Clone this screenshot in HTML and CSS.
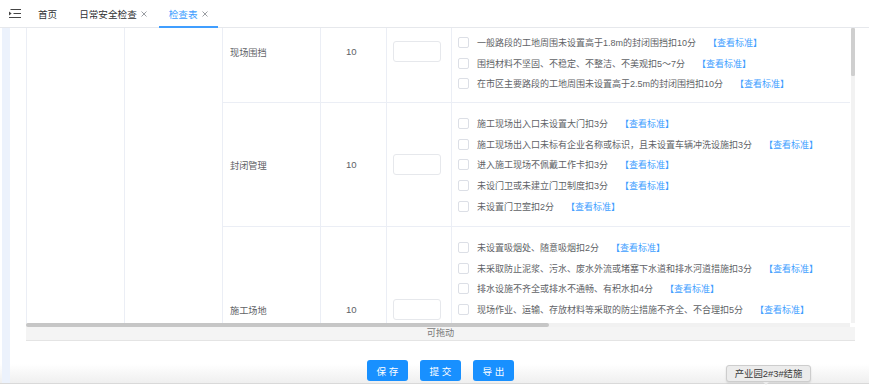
FILE: index.html
```html
<!DOCTYPE html>
<html lang="zh-CN">
<head>
<meta charset="utf-8">
<title>检查表</title>
<link rel="stylesheet" href="styles.css">
</head>
<body>
<div class="app">
  <header class="tabs">
    <div class="menu">
      <svg width="12" height="9" viewBox="0 0 12 9"><path d="M1.5 0.5H12M4.5 4.5H12M0 8.5H12" stroke="#444" stroke-width="1" fill="none"/><path d="M0 2.6L2.6 4.5L0 6.4Z" fill="#444"/></svg>
    </div>
    <div class="tab">首页</div>
    <div class="tab">日常安全检查<svg class="x" width="6" height="6" viewBox="0 0 6 6"><path d="M0.5 0.5L5.5 5.5M5.5 0.5L0.5 5.5" stroke="#909399" stroke-width="0.9"/></svg></div>
    <div class="tab active">检查表<svg class="x" width="6" height="6" viewBox="0 0 6 6"><path d="M0.5 0.5L5.5 5.5M5.5 0.5L0.5 5.5" stroke="#909399" stroke-width="0.9"/></svg></div>
  </header>
  <div class="main">
    <div class="side"></div>
    <div class="content">
      <div class="grid-wrap">
        <div class="viewport">
          <table class="sheet">
            <colgroup>
              <col class="c1"><col class="c2"><col class="c3"><col class="c4"><col class="c5"><col class="c6">
            </colgroup>
            <tr class="r1">
              <td class="blank" rowspan="3"></td>
              <td class="blank" rowspan="3"></td>
              <td class="name">现场围挡</td>
              <td class="score">10</td>
              <td class="inp"><div class="input"></div></td>
              <td class="items first">
                <div class="item"><span class="cb"></span><span class="txt">一般路段的工地周围未设置高于1.8m的封闭围挡扣10分</span><a class="link">【查看标准】</a></div>
                <div class="item"><span class="cb"></span><span class="txt">围挡材料不坚固、不稳定、不整洁、不美观扣5～7分</span><a class="link">【查看标准】</a></div>
                <div class="item"><span class="cb"></span><span class="txt">在市区主要路段的工地周围未设置高于2.5m的封闭围挡扣10分</span><a class="link">【查看标准】</a></div>
              </td>
            </tr>
            <tr class="r2">
              <td class="name">封闭管理</td>
              <td class="score">10</td>
              <td class="inp"><div class="input"></div></td>
              <td class="items">
                <div class="item"><span class="cb"></span><span class="txt">施工现场出入口未设置大门扣3分</span><a class="link">【查看标准】</a></div>
                <div class="item"><span class="cb"></span><span class="txt">施工现场出入口未标有企业名称或标识，且未设置车辆冲洗设施扣3分</span><a class="link">【查看标准】</a></div>
                <div class="item"><span class="cb"></span><span class="txt">进入施工现场不佩戴工作卡扣3分</span><a class="link">【查看标准】</a></div>
                <div class="item"><span class="cb"></span><span class="txt">未设门卫或未建立门卫制度扣3分</span><a class="link">【查看标准】</a></div>
                <div class="item"><span class="cb"></span><span class="txt">未设置门卫室扣2分</span><a class="link">【查看标准】</a></div>
              </td>
            </tr>
            <tr class="r3">
              <td class="name">施工场地</td>
              <td class="score">10</td>
              <td class="inp"><div class="input"></div></td>
              <td class="items">
                <div class="item"><span class="cb"></span><span class="txt">未设置吸烟处、随意吸烟扣2分</span><a class="link">【查看标准】</a></div>
                <div class="item"><span class="cb"></span><span class="txt">未采取防止泥浆、污水、废水外流或堵塞下水道和排水河道措施扣3分</span><a class="link">【查看标准】</a></div>
                <div class="item"><span class="cb"></span><span class="txt">排水设施不齐全或排水不通畅、有积水扣4分</span><a class="link">【查看标准】</a></div>
                <div class="item"><span class="cb"></span><span class="txt">现场作业、运输、存放材料等采取的防尘措施不齐全、不合理扣5分</span><a class="link">【查看标准】</a></div>
              </td>
            </tr>
          </table>
        </div>
        <div class="vbar"><div class="vthumb"></div></div>
      </div>
      <div class="hbar"><div class="hthumb"></div></div>
      <div class="drag">可拖动</div>
      <div class="actions">
        <button class="btn">保 存</button>
        <button class="btn">提 交</button>
        <button class="btn">导 出</button>
      </div>
    </div>
  </div>
  <div class="footer-line"></div>
  <div class="tooltip">产业园2#3#结施</div>
</div>
</body>
</html>
```
FILE: styles.css
```css
* { box-sizing: border-box; }
html, body { margin: 0; padding: 0; }
body {
  width: 869px;
  height: 387px;
  overflow: hidden;
  background: #fff;
  font-family: "Liberation Sans", "Noto Sans CJK SC", sans-serif;
  color: #606266;
}
.app { position: relative; width: 869px; height: 387px; }

.tabs {
  height: 28px;
  border-bottom: 1px solid #e6e8ec;
  display: flex;
  align-items: stretch;
}
.menu {
  width: 28px;
  padding-left: 9px;
  display: flex;
  align-items: center;
}
.tab {
  position: relative;
  display: flex;
  align-items: center;
  padding: 0 10px;
  margin-right: 1px;
  font-size: 9.6px;
  color: #303133;
}
.tab + .tab { margin-left: 1px; }
.tab .x { margin-left: 4px; }
.tab.active { color: #409eff; }
.tab.active::after {
  content: "";
  position: absolute;
  left: 0; right: 0; bottom: -1px;
  height: 2px;
  background: #409eff;
}

.main {
  display: flex;
  height: 355px;
  background: linear-gradient(to bottom, #fff 0, #fff 336px, #efefef 355px);
}
.side {
  margin-left: 2px;
  width: 8px;
  background: #ecf2fc;
}
.content {
  margin-left: 16px;
  width: 829px;
  display: flex;
  flex-direction: column;
}
.grid-wrap {
  display: flex;
  height: 295px;
}
.viewport {
  width: 824px;
  height: 295px;
  overflow: hidden;
}
.vbar {
  width: 5px;
  padding-left: 1px;
}
.vbar::after {
  content: "";
  display: block;
  width: 4px;
  height: 247px;
  background: #f2f2f2;
}
.vthumb {
  width: 4px;
  height: 48px;
  background: #cfcfcf;
  border-radius: 1px;
}

.sheet {
  table-layout: fixed;
  width: 824px;
  border-collapse: separate;
  border-spacing: 0;
  margin-top: -27px;
  border-left: 1px solid #ebeef5;
}
.c1 { width: 98px; }
.c2 { width: 98px; }
.c3 { width: 98px; }
.c4 { width: 66px; }
.c5 { width: 65px; }
.c6 { width: 399px; }
.sheet td {
  border-right: 1px solid #ebeef5;
  border-bottom: 1px solid #ebeef5;
  padding: 0;
  font-size: 9px;
  color: #606266;
}
.r1 { height: 102px; }
.r2 { height: 124px; }
.r3 { height: 166px; }
.name { padding-left: 7px !important; vertical-align: middle; font-size: 9.2px !important; }
.score { padding-left: 25px !important; vertical-align: middle; font-size: 9.6px !important; }
.inp { padding-left: 6px !important; vertical-align: middle; }
.input {
  width: 48px;
  height: 21px;
  border: 1px solid #e6e8ec;
  border-radius: 3px;
  background: #fff;
}
.items {
  vertical-align: top;
  padding: 10px 0 0 6px !important;
}
.items.first { padding-top: 31px !important; }
.item {
  display: flex;
  align-items: center;
  height: 20.8px;
  white-space: nowrap;
}
.cb {
  width: 11px;
  height: 11px;
  border: 1px solid #dcdfe6;
  border-radius: 2px;
  background: #fff;
  margin-right: 8px;
  flex: none;
}
.link {
  margin-left: 12px;
  color: #409eff;
}

.hbar {
  width: 824px;
  height: 4px;
  background: #f1f1f1;
}
.hthumb {
  width: 523px;
  height: 4px;
  background: #c6c6c6;
  border-radius: 2px;
}
.drag {
  height: 14px;
  background: #f4f4f4;
  border-bottom: 1px solid #e4e4e4;
  font-size: 9.2px;
  line-height: 13px;
  text-align: center;
  color: #7a7a7a;
}
.actions {
  margin-top: 19px;
  display: flex;
  justify-content: center;
  gap: 12px;
}
.btn {
  width: 41px;
  height: 21px;
  border: none;
  border-radius: 3px;
  background: #1890ff;
  color: #fff;
  font-family: "Liberation Sans", "Noto Sans CJK SC", sans-serif;
  font-size: 9.6px;
  padding: 0;
}

.footer-line {
  height: 1px;
  background: #d9d9d9;
}

.tooltip {
  position: absolute;
  left: 726px;
  top: 365px;
  width: 85px;
  height: 17px;
  background: #ececec;
  border: 1px solid #cdcdcd;
  border-radius: 3px;
  box-shadow: 0 1px 2px rgba(0,0,0,0.12);
  font-size: 9.4px;
  line-height: 15px;
  color: #3a3a3a;
  text-align: center;
}
.tooltip::after {
  content: "";
  position: absolute;
  left: 36px;
  bottom: -4px;
  width: 0; height: 0;
  border-left: 3px solid transparent;
  border-right: 3px solid transparent;
  border-top: 3px solid #ececec;
}
```
